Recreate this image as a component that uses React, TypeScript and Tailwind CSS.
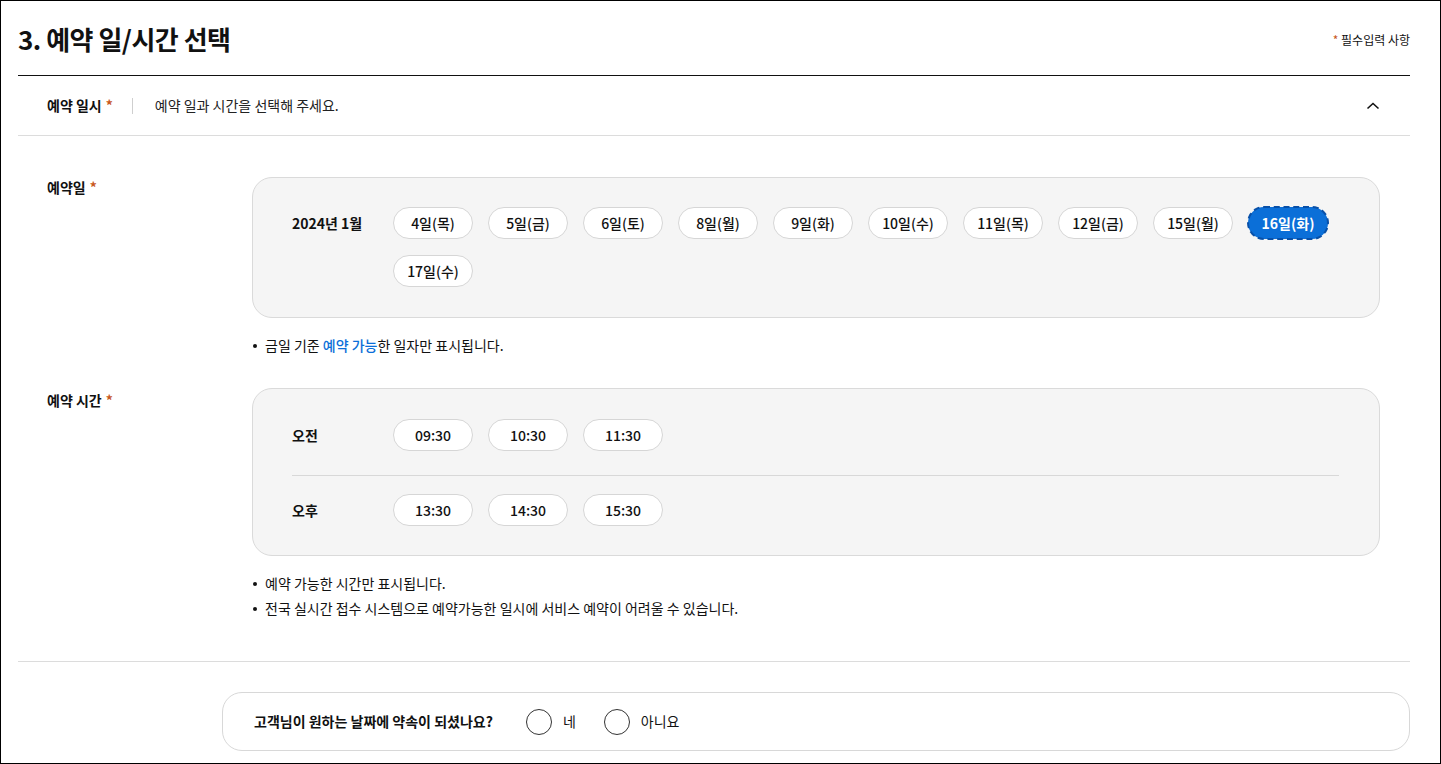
import React from 'react';

// 예약 일/시간 선택 step

const dates = [
  '4일(목)',
  '5일(금)',
  '6일(토)',
  '8일(월)',
  '9일(화)',
  '10일(수)',
  '11일(목)',
  '12일(금)',
  '15일(월)',
  '16일(화)',
  '17일(수)',
];

const selectedDate = '16일(화)';

const times = [
  { label: '오전', slots: ['09:30', '10:30', '11:30'] },
  { label: '오후', slots: ['13:30', '14:30', '15:30'] },
];

function Chip({ text, active }: { text: string; active?: boolean }) {
  if (active) {
    return (
      <button className="w-[80px] h-[32px] rounded-full bg-[#0b6fd8] text-white text-[14px] font-semibold leading-none outline-2 outline-dashed outline-[#0850a8] -outline-offset-1">
        {text}
      </button>
    );
  }
  return (
    <button className="w-[80px] h-[32px] rounded-full bg-white border border-[#d6d6d6] text-[#111] text-[14px] font-medium leading-none">
      {text}
    </button>
  );
}

function Req() {
  return <span className="text-[#c8581c] ml-1">*</span>;
}

function Note({ children }: { children: React.ReactNode }) {
  return (
    <li className="flex items-center gap-[8px] h-[25px] text-[14px] text-[#111]">
      <span className="w-[4px] h-[4px] rounded-full bg-[#111] ml-[1px]" />
      <span>{children}</span>
    </li>
  );
}

export default function App() {
  return (
    <div
      className="w-full h-[764px] border border-black overflow-hidden bg-white text-[#111]"
      style={{ fontFamily: '"Noto Sans CJK KR", "Noto Sans", sans-serif' }}
    >
      <div className="pl-[17px] pr-[30px]">
        {/* Title */}
        <div className="h-[74px] flex items-center justify-between border-b border-[#111] box-content">
          <h2 className="text-[26px] font-bold tracking-[-0.5px] leading-none pt-[2px]">3. 예약 일/시간 선택</h2>
          <p className="text-[12px] pt-[4px]">
            <span className="text-[#c8581c]">*</span> 필수입력 사항
          </p>
        </div>

        {/* Accordion header */}
        <div className="h-[60px] flex items-center border-b border-[#dcdcdc] pl-[29px] pr-[29px]">
          <span className="text-[14px] font-bold">
            예약 일시
            <Req />
          </span>
          <span className="w-px h-[16px] bg-[#cfcfcf] ml-[19px] mr-[22px]" />
          <span className="text-[14px] text-[#222]">예약 일과 시간을 선택해 주세요.</span>
          <svg className="ml-auto" width="16" height="16" viewBox="0 0 16 16" fill="none">
            <path d="M2.5 10.5 8 5.5l5.5 5" stroke="#111" strokeWidth="1.6" />
          </svg>
        </div>

        {/* Body */}
        <div className="pl-[29px] pr-[30px] pt-[41px] pb-[40px] border-b border-[#dcdcdc]">
          {/* 예약일 */}
          <div className="flex">
            <div className="w-[205px] shrink-0 text-[14px] font-bold leading-[20px]">
              예약일
              <Req />
            </div>
            <div className="flex-1">
              <div className="rounded-[20px] border border-[#dadada] bg-[#f5f5f5] pt-[29px] pb-[30px] pl-[39px] pr-[40px] flex">
                <div className="w-[101px] shrink-0 h-[32px] flex items-center text-[14px] font-semibold">2024년 1월</div>
                <div className="flex flex-wrap gap-x-[15px] gap-y-[16px]">
                  {dates.map((d) => (
                    <Chip key={d} text={d} active={d === selectedDate} />
                  ))}
                </div>
              </div>
              <ul className="mt-[15px]">
                <Note>
                  금일 기준 <span className="text-[#0b6fd8] font-medium">예약 가능</span>한 일자만 표시됩니다.
                </Note>
              </ul>
            </div>
          </div>

          {/* 예약 시간 */}
          <div className="flex mt-[30px]">
            <div className="w-[205px] shrink-0 text-[14px] font-bold leading-[20px] pt-[2px]">
              예약 시간
              <Req />
            </div>
            <div className="flex-1">
              <div className="rounded-[20px] border border-[#dadada] bg-[#f5f5f5] pt-[30px] pb-[29px] pl-[39px] pr-[40px]">
                {times.map((row, i) => (
                  <div key={row.label}>
                    {i > 0 && <div className="h-px bg-[#d8d8d8] mt-[24px] mb-[18px]" />}
                    <div className="flex items-center">
                      <div className="w-[101px] shrink-0 text-[14px] font-semibold">{row.label}</div>
                      <div className="flex gap-x-[15px]">
                        {row.slots.map((s) => (
                          <Chip key={s} text={s} />
                        ))}
                      </div>
                    </div>
                  </div>
                ))}
              </div>
              <ul className="mt-[15px]">
                <Note>예약 가능한 시간만 표시됩니다.</Note>
                <Note>전국 실시간 접수 시스템으로 예약가능한 일시에 서비스 예약이 어려울 수 있습니다.</Note>
              </ul>
            </div>
          </div>
        </div>

        {/* Confirm question */}
        <div className="ml-[204px] mt-[30px] h-[59px] rounded-[20px] border border-[#d8d8d8] flex items-center pl-[31px]">
          <span className="text-[14px] font-bold">고객님이 원하는 날짜에 약속이 되셨나요?</span>
          <label className="flex items-center ml-[33px]">
            <span className="w-[26px] h-[26px] rounded-full border-[1.5px] border-[#333] bg-white" />
            <span className="text-[14px] ml-[11px]">네</span>
          </label>
          <label className="flex items-center ml-[28px]">
            <span className="w-[26px] h-[26px] rounded-full border-[1.5px] border-[#333] bg-white" />
            <span className="text-[14px] ml-[11px]">아니요</span>
          </label>
        </div>
      </div>
    </div>
  );
}
